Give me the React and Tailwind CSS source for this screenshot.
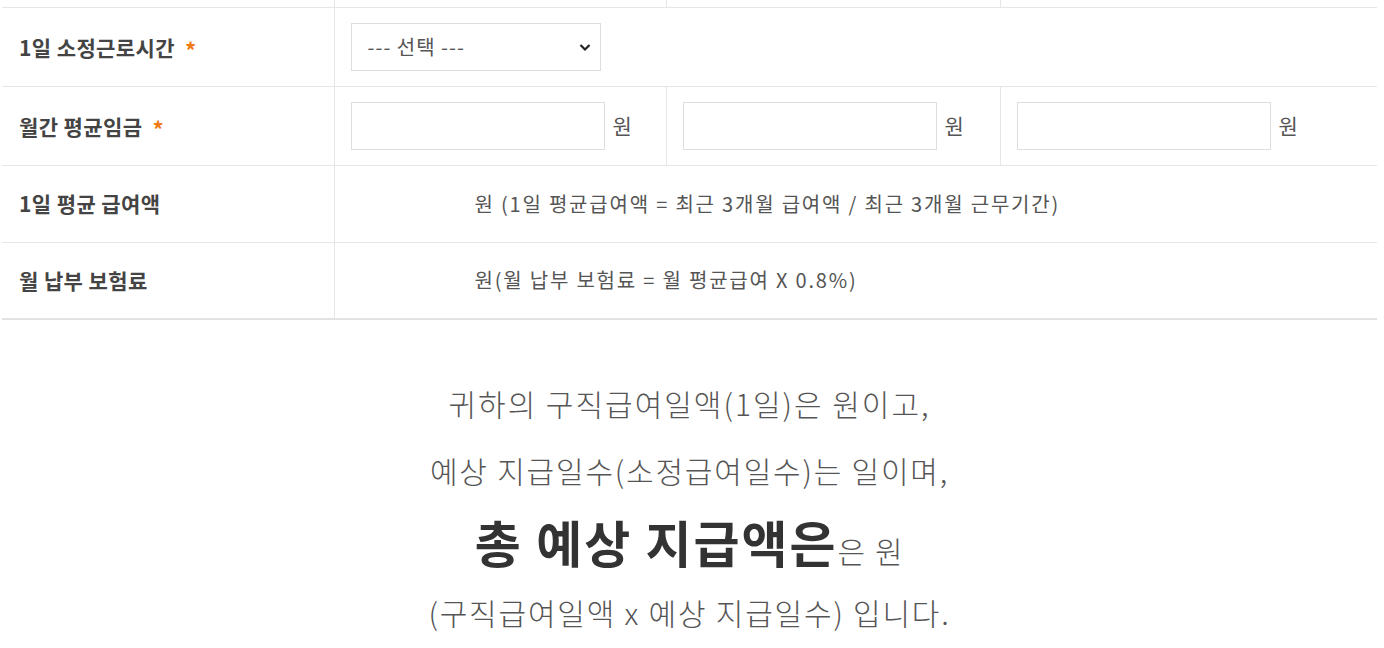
import React from "react";

const F = { fontFamily: '"Noto Sans CJK KR", "Noto Sans", sans-serif' };

function Star() {
  return <span className="ml-[10px] text-[#f07b14] font-bold text-[22px] relative top-[3px]">*</span>;
}

function Label({ children, star }) {
  return (
    <td className="border-b border-[#e6e6e6] border-r pl-[17px] align-middle">
      <span className="text-[21px] font-bold text-[#444] tracking-[0.4px]">{children}</span>
      {star && <Star />}
    </td>
  );
}

function MoneyCell({ last }) {
  return (
    <td className={"border-b border-[#e6e6e6] pl-[16px] align-middle " + (last ? "" : "border-r")}>
      <div className="flex items-center">
        <input className="w-[254px] h-[48px] border border-[#dedede] bg-white outline-none" />
        <span className="ml-[8px] text-[21px] text-[#555]">원</span>
      </div>
    </td>
  );
}

export default function App() {
  return (
    <div className="w-[1384px] h-[648px] bg-white overflow-hidden" style={F}>
      <div className="pl-[2px] w-[1377px]">
        <table className="w-[1375px] border-collapse table-fixed border-[#e6e6e6]">
          <colgroup>
            <col className="w-[332px]" />
            <col className="w-[332px]" />
            <col className="w-[334px]" />
            <col className="w-[377px]" />
          </colgroup>
          <tbody>
            <tr className="h-[7px]">
              <td className="border-r border-b border-[#e6e6e6]"></td>
              <td className="border-r border-b border-[#e6e6e6]"></td>
              <td className="border-r border-b border-[#e6e6e6]"></td>
              <td className="border-b border-[#e6e6e6]"></td>
            </tr>
            <tr className="h-[79px]">
              <Label star>1일 소정근로시간</Label>
              <td colSpan={3} className="border-b border-[#e6e6e6] pl-[16px] align-middle">
                <div className="relative w-[250px] h-[48px] border border-[#dedede] flex items-center pl-[16px]">
                  <span className="text-[20px] text-[#555] tracking-[1px]">--- 선택 ---</span>
                  <svg className="absolute right-[9px] top-[19px]" width="12" height="9" viewBox="0 0 12 9">
                    <path d="M1.5 2 L6 6.5 L10.5 2" fill="none" stroke="#222" strokeWidth="2.2" />
                  </svg>
                </div>
              </td>
            </tr>
            <tr className="h-[79px]">
              <Label star>월간 평균임금</Label>
              <MoneyCell />
              <MoneyCell />
              <MoneyCell last />
            </tr>
            <tr className="h-[77px]">
              <Label>1일 평균 급여액</Label>
              <td colSpan={3} className="border-b border-[#e6e6e6] pl-[140px] align-middle">
                <span className="text-[20px] text-[#555] tracking-[1.8px]">원 (1일 평균급여액 = 최근 3개월 급여액 / 최근 3개월 근무기간)</span>
              </td>
            </tr>
            <tr className="h-[77px]">
              <td className="border-b-2 border-[#e2e2e2] border-r border-r-[#e6e6e6] pl-[17px] align-middle">
                <span className="text-[21px] font-bold text-[#444] tracking-[0.4px]">월 납부 보험료</span>
              </td>
              <td colSpan={3} className="border-b-2 border-[#e2e2e2] pl-[140px] align-middle">
                <span className="text-[20px] text-[#555] tracking-[1.8px]">원(월 납부 보험료 = 월 평균급여 X 0.8%)</span>
              </td>
            </tr>
          </tbody>
        </table>
        <div className="flex flex-col items-center text-[#555] pt-[63px]">
          <p className="text-[30px] font-light leading-[40px] tracking-[2px]">귀하의 구직급여일액(1일)은 원이고,</p>
          <p className="text-[30px] font-light leading-[40px] mt-[27px] tracking-[1.8px]">예상 지급일수(소정급여일수)는 일이며,</p>
          <p className="leading-[64px] mt-[19px]">
            <span className="text-[50px] font-bold text-[#333] tracking-[2px]">총 예상 지급액은</span>
            <span className="text-[30px] font-light tracking-[1.6px]">은 원</span>
          </p>
          <p className="text-[30px] font-light leading-[40px] mt-[4px] tracking-[1.8px]">(구직급여일액 x 예상 지급일수) 입니다.</p>
        </div>
      </div>
    </div>
  );
}
